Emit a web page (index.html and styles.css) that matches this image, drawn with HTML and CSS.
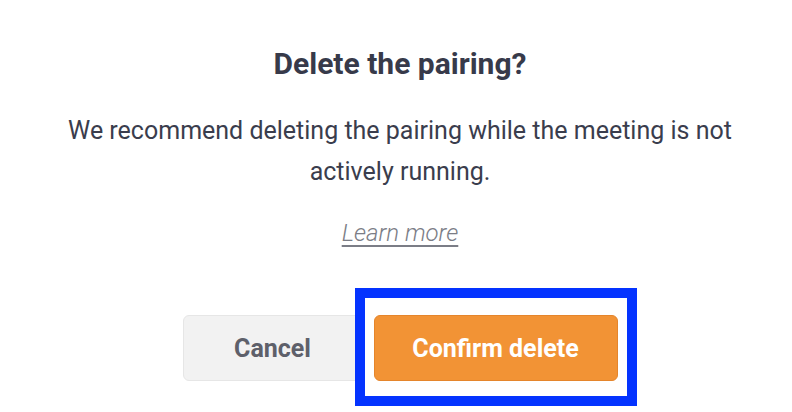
FILE: index.html
```html
<!DOCTYPE html>
<html lang="en">
<head>
<meta charset="utf-8">
<title>Delete the pairing?</title>
<link rel="stylesheet" href="styles.css">
</head>
<body>
<main class="dialog">
  <h1 class="title">Delete the pairing?</h1>
  <p class="message">We recommend deleting the pairing while the meeting is not actively running.</p>
  <a class="learn" href="#">Learn more</a>
  <div class="actions">
    <button class="btn btn-cancel" type="button">Cancel</button>
    <button class="btn btn-confirm" type="button">Confirm delete</button>
  </div>
</main>
</body>
</html>
```

FILE: styles.css
```css
html, body {
  margin: 0;
  padding: 0;
  background: #ffffff;
}

body {
  font-family: Roboto, "Liberation Sans", Arial, sans-serif;
  width: 792px;
  height: 412px;
  overflow: hidden;
}

.dialog {
  display: flex;
  flex-direction: column;
  align-items: center;
  padding: 0 0 0 8px;
  text-align: center;
  color: #373a4a;
}

.title {
  margin: 46px 0 0;
  font-size: 30px;
  line-height: 36px;
  font-weight: 700;
  color: #373a4a;
}

.message {
  margin: 28px 0 0;
  width: 700px;
  font-size: 25px;
  line-height: 41px;
  font-weight: 400;
  color: #3a3d4d;
}

.learn {
  margin-top: 27px;
  font-size: 24px;
  line-height: 28px;
  font-weight: 300;
  font-style: italic;
  color: #7b7d86;
  text-decoration: underline;
  text-decoration-thickness: 1.5px;
  text-underline-offset: 4px;
}

.actions {
  display: flex;
  gap: 11px;
  margin-top: 68px;
}

.btn {
  height: 66px;
  border-radius: 6px;
  font-family: Roboto, "Liberation Sans", Arial, sans-serif;
  font-size: 25px;
  font-weight: 700;
  cursor: pointer;
}

.btn-cancel {
  width: 180px;
  background: #f2f2f2;
  border: 1px solid #e6e6e6;
  color: #5e606a;
}

.btn-confirm {
  position: relative;
  width: 244px;
  background: #f29335;
  border: 1px solid #e5852b;
  color: #ffffff;
}

.btn-confirm::after {
  content: "";
  position: absolute;
  left: -20px;
  right: -20px;
  top: -28px;
  bottom: -26px;
  border: 10px solid #0433ff;
  pointer-events: none;
}
```
